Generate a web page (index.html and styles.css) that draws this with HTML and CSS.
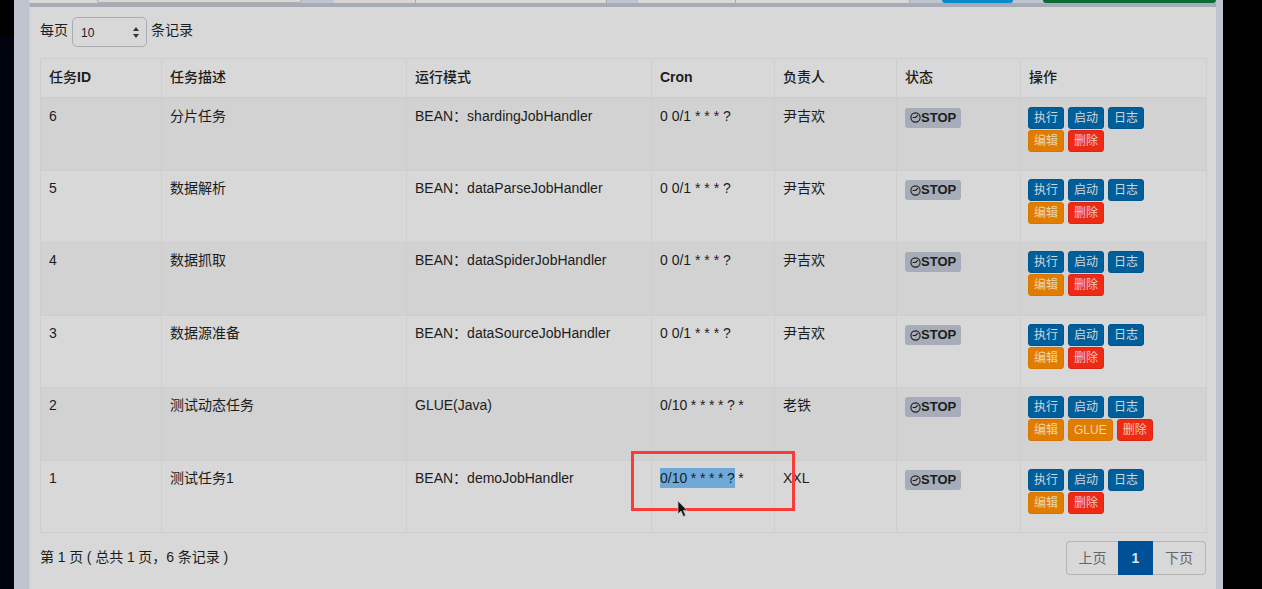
FILE: index.html
```html
<!DOCTYPE html>
<html lang="zh-CN">
<head>
<meta charset="utf-8">
<title>任务调度</title>
<link rel="stylesheet" href="styles.css">
</head>
<body>
<div class="screen">
  <div class="edge-left"></div>
  <div class="page">
    <div class="toolbar">
      <div class="seg s1"></div>
      <div class="seg s2"></div>
      <div class="gap g1"></div>
      <div class="seg s3"></div>
      <div class="seg s4"></div>
      <div class="gap g2"></div>
      <div class="seg s5"></div>
      <div class="seg s6"></div>
      <div class="gap g3"></div>
      <div class="tbtn blue"></div>
      <div class="gap g4"></div>
      <div class="tbtn green"></div>
    </div>
    <div class="box">
      <div class="length">
        <span>每页</span>
        <div class="select"><span>10</span>
          <svg class="arrows" width="6" height="11" viewBox="0 0 6 11"><path d="M3 0 6 4H0zM3 11 0 7h6z"/></svg>
        </div>
        <span>条记录</span>
      </div>
      <table class="grid">
        <colgroup><col class="c1"><col class="c2"><col class="c3"><col class="c4"><col class="c5"><col class="c6"><col class="c7"></colgroup>
        <thead>
          <tr><th>任务<b>ID</b></th><th>任务描述</th><th>运行模式</th><th><b>Cron</b></th><th>负责人</th><th>状态</th><th>操作</th></tr>
        </thead>
        <tbody>
          <tr><td>6</td><td>分片任务</td><td>BEAN：shardingJobHandler</td><td>0 0/1 * * * ?</td><td>尹吉欢</td>
            <td><span class="label"><svg class="clock" width="11" height="11" viewBox="0 0 11 11"><circle cx="5.5" cy="5.5" r="4.6"/><path d="M5.500 5.500 8 3.200M5.500 5.500H2.600"/></svg>STOP</span></td>
            <td><div class="ops"><a class="btn primary">执行</a><a class="btn primary">启动</a><a class="btn primary">日志</a></div><div class="ops"><a class="btn warn">编辑</a><a class="btn danger">删除</a></div></td></tr>
          <tr><td>5</td><td>数据解析</td><td>BEAN：dataParseJobHandler</td><td>0 0/1 * * * ?</td><td>尹吉欢</td>
            <td><span class="label"><svg class="clock" width="11" height="11" viewBox="0 0 11 11"><circle cx="5.5" cy="5.5" r="4.6"/><path d="M5.500 5.500 8 3.200M5.500 5.500H2.600"/></svg>STOP</span></td>
            <td><div class="ops"><a class="btn primary">执行</a><a class="btn primary">启动</a><a class="btn primary">日志</a></div><div class="ops"><a class="btn warn">编辑</a><a class="btn danger">删除</a></div></td></tr>
          <tr><td>4</td><td>数据抓取</td><td>BEAN：dataSpiderJobHandler</td><td>0 0/1 * * * ?</td><td>尹吉欢</td>
            <td><span class="label"><svg class="clock" width="11" height="11" viewBox="0 0 11 11"><circle cx="5.5" cy="5.5" r="4.6"/><path d="M5.500 5.500 8 3.200M5.500 5.500H2.600"/></svg>STOP</span></td>
            <td><div class="ops"><a class="btn primary">执行</a><a class="btn primary">启动</a><a class="btn primary">日志</a></div><div class="ops"><a class="btn warn">编辑</a><a class="btn danger">删除</a></div></td></tr>
          <tr><td>3</td><td>数据源准备</td><td>BEAN：dataSourceJobHandler</td><td>0 0/1 * * * ?</td><td>尹吉欢</td>
            <td><span class="label"><svg class="clock" width="11" height="11" viewBox="0 0 11 11"><circle cx="5.5" cy="5.5" r="4.6"/><path d="M5.500 5.500 8 3.200M5.500 5.500H2.600"/></svg>STOP</span></td>
            <td><div class="ops"><a class="btn primary">执行</a><a class="btn primary">启动</a><a class="btn primary">日志</a></div><div class="ops"><a class="btn warn">编辑</a><a class="btn danger">删除</a></div></td></tr>
          <tr><td>2</td><td>测试动态任务</td><td>GLUE(Java)</td><td class="tight">0/10 * * * * ? *</td><td>老铁</td>
            <td><span class="label"><svg class="clock" width="11" height="11" viewBox="0 0 11 11"><circle cx="5.5" cy="5.5" r="4.6"/><path d="M5.500 5.500 8 3.200M5.500 5.500H2.600"/></svg>STOP</span></td>
            <td><div class="ops"><a class="btn primary">执行</a><a class="btn primary">启动</a><a class="btn primary">日志</a></div><div class="ops"><a class="btn warn">编辑</a><a class="btn warn">GLUE</a><a class="btn danger">删除</a></div></td></tr>
          <tr><td>1</td><td>测试任务1</td><td>BEAN：demoJobHandler</td><td class="tight"><span class="selected">0/10 * * * * ?</span> *</td><td>XXL</td>
            <td><span class="label"><svg class="clock" width="11" height="11" viewBox="0 0 11 11"><circle cx="5.5" cy="5.5" r="4.6"/><path d="M5.500 5.500 8 3.200M5.500 5.500H2.600"/></svg>STOP</span></td>
            <td><div class="ops"><a class="btn primary">执行</a><a class="btn primary">启动</a><a class="btn primary">日志</a></div><div class="ops"><a class="btn warn">编辑</a><a class="btn danger">删除</a></div></td></tr>
        </tbody>
      </table>
      <div class="foot">
        <div class="info">第 1 页 ( 总共 1 页，6 条记录 )</div>
        <div class="pager"><a class="pg prev">上页</a><a class="pg cur">1</a><a class="pg next">下页</a></div>
      </div>
    </div>
  </div>
  <div class="edge-right"></div>
  <div class="annot"></div>
  <svg class="cursor" width="13" height="19" viewBox="0 0 13 19"><path d="M2 1v13l3-3 2.400 5.400 2.200-1L7.300 10.300H11z" fill="#111" stroke="#bbb" stroke-width=".8"/></svg>
</div>
</body>
</html>
```
FILE: styles.css
```css
* { box-sizing: border-box; }
html, body { margin: 0; padding: 0; background: #000; }
body {
  font-family: "Liberation Sans", "Noto Sans CJK SC", sans-serif;
  font-size: 14px;
  line-height: 20px;
  color: #1c1c1c;
}
.screen { position: relative; display: flex; width: 1262px; height: 589px; overflow: hidden; }
.edge-left { width: 14px; flex: none; background: linear-gradient(#000 0 35px, #00020d 35px); }
.edge-right { flex: 1; background: #000; }
.page { width: 1209px; flex: none; padding: 0 7px 0 15px; background: #bfc5cf; display: flex; flex-direction: column; }

.toolbar { display: flex; height: 3px; flex: none; }
.seg { background: #d8d8d8; border-right: 1px solid #a9a9a9; }
.s1 { width: 68px; border-right: 0; }
.s2 { width: 205px; border: 1px solid #b0b0b0; border-top: 0; border-radius: 0 0 4px 4px; }
.s3 { width: 82px; background: #d8d4d4; }
.s4 { width: 191px; }
.s5 { width: 98px; }
.s6 { width: 174px; }
.g1 { width: 32px; }
.g2 { width: 31px; }
.g3 { width: 32px; }
.g4 { width: 30px; }
.tbtn { border-radius: 0 0 4px 4px; }
.blue { width: 71px; background: #0a8ac8; }
.green { width: 173px; background: #0a6b36; }

.box {
  flex: 1;
  background: #d8d8d8;
  border-top: 4px solid #a6abb5;
  border-left: 1px solid #cbcfd2;
  padding: 10px 10px 0 10px;
}
.length { display: flex; align-items: flex-start; gap: 4px; height: 30px; margin-bottom: 11px; padding-top: 3px; }
.length .select { margin-top: -3px; }
.select {
  width: 75px;
  height: 30px;
  border: 1px solid #a9adb1;
  border-radius: 5px;
  font-size: 12px;
  padding: 1px 7px 0 8px;
  display: flex;
  align-items: center;
  justify-content: space-between;
}
.arrows { fill: #333; }

.grid { border-collapse: collapse; table-layout: fixed; width: 1166px; }
.c1 { width: 121px; }
.c2, .c3 { width: 245px; }
.c4 { width: 123px; }
.c5 { width: 122px; }
.c6 { width: 124px; }
.c7 { width: 186px; }
.grid th, .grid td { border: 1px solid #cecece; padding: 7px 8px 0; text-align: left; vertical-align: top; }
.grid th { height: 39px; border-bottom: 2px solid #cecece; font-weight: 500; padding-top: 8px; }
.grid td { height: 73px; }
.grid tbody tr:nth-child(even) td { height: 72px; }
.grid tbody tr:nth-child(odd) { background: #d2d2d2; }

.tight { word-spacing: -.3px; }
.selected { background: #6fa9d9; display: inline-block; height: 20px; }
.label {
  display: inline-flex;
  align-items: center;
  height: 20px;
  padding: 0 5px;
  background: #a6adb8;
  border-radius: 3px;
  font-size: 13px;
  font-weight: 700;
  color: #1c1c1c;
  margin-top: 2px;
}
.clock { fill: none; stroke: #1c1c1c; stroke-width: 1.1; flex: none; }
.ops { display: flex; gap: 4px; margin: 0 0 1px -1px; }
.ops:first-child { margin-top: 1px; }
.btn {
  display: block;
  height: 22px;
  padding: 0 5px;
  border: 1px solid transparent;
  border-radius: 3px;
  font-size: 12px;
  line-height: 20px;
  color: #cfd8df;
}
.primary { background: #005f9b; border-color: #00568e; }
.warn { background: #e07d00; border-color: #d47600; color: #eed5ad; }
.danger { background: #ee2a15; border-color: #dc2612; color: #f0c8c0; }

.foot { display: flex; justify-content: space-between; align-items: flex-start; padding-top: 8px; }
.info { padding-top: 6px; word-spacing: -.2px; }
.pager { display: flex; height: 34px; color: #666; }
.pg { display: flex; align-items: center; justify-content: center; border: 1px solid #b5b5b5; }
.prev { width: 52px; border-radius: 4px 0 0 4px; border-right: 0; }
.cur { width: 35px; background: #005097; border-color: #005097; color: #d8e2ea; font-weight: 700; }
.next { width: 53px; border-radius: 0 4px 4px 0; border-left: 0; }

.annot { position: absolute; left: 631px; top: 451px; width: 164px; height: 60px; border: 3px solid #fb3a3a; }
.cursor { position: absolute; left: 676px; top: 500px; }
```
